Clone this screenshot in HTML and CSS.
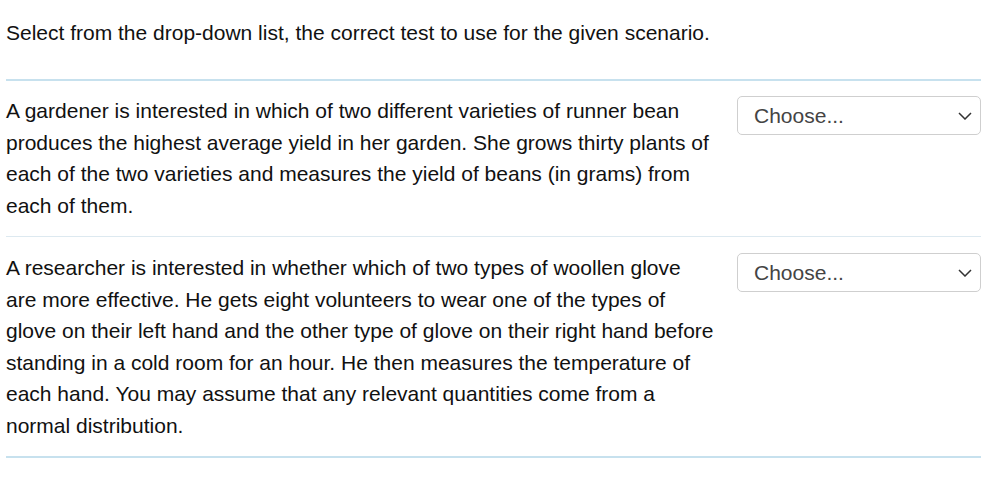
FILE: index.html
```html
<!DOCTYPE html>
<html>
<head>
<meta charset="utf-8">
<link rel="stylesheet" href="styles.css">
</head>
<body>
<div class="page">
  <p class="prompt">Select from the drop-down list, the correct test to use for the given scenario.</p>
  <div class="questions">
    <div class="row">
      <div class="scenario">A gardener is interested in which of two different varieties of runner bean produces the highest average yield in her garden. She grows thirty plants of each of the two varieties and measures the yield of beans (in grams) from each of them.</div>
      <div class="select">
        <span class="select-text">Choose...</span>
        <svg class="chev" width="14" height="8" viewBox="0 0 14 8"><path d="M1 1 L7 7 L13 1" fill="none" stroke="#333" stroke-width="1.5"/></svg>
      </div>
    </div>
    <div class="row">
      <div class="scenario">A researcher is interested in whether which of two types of woollen glove are more effective. He gets eight volunteers to wear one of the types of glove on their left hand and the other type of glove on their right hand before standing in a cold room for an hour. He then measures the temperature of each hand. You may assume that any relevant quantities come from a normal distribution.</div>
      <div class="select">
        <span class="select-text">Choose...</span>
        <svg class="chev" width="14" height="8" viewBox="0 0 14 8"><path d="M1 1 L7 7 L13 1" fill="none" stroke="#333" stroke-width="1.5"/></svg>
      </div>
    </div>
  </div>
</div>
</body>
</html>
```
FILE: styles.css
```css
html, body {
  margin: 0;
  padding: 0;
  background: #fff;
}
.page {
  width: 975px;
  padding: 0 6px;
  font-family: "Liberation Sans", Arial, sans-serif;
  font-size: 21px;
  line-height: 31.5px;
  color: #111;
}
.prompt {
  margin: 0;
  padding-top: 17px;
  height: 62px;
}
.questions {
  border-top: 2px solid #c7e1ee;
  border-bottom: 2px solid #c7e1ee;
}
.row {
  display: flex;
  justify-content: space-between;
  align-items: flex-start;
  padding: 14px 0 15px;
}
.row + .row {
  border-top: 1px solid #dde9f0;
  padding-top: 15px;
}
.scenario {
  width: 709px;
}
.select {
  box-sizing: border-box;
  width: 244px;
  height: 39px;
  margin-top: 1px;
  border: 1px solid #cfcfcf;
  border-radius: 5px;
  display: flex;
  align-items: center;
  justify-content: space-between;
  padding: 0 8px 0 16px;
}
.select-text {
  color: #444;
  font-size: 21px;
  line-height: 22px;
}
.chev {
  display: block;
}
```
